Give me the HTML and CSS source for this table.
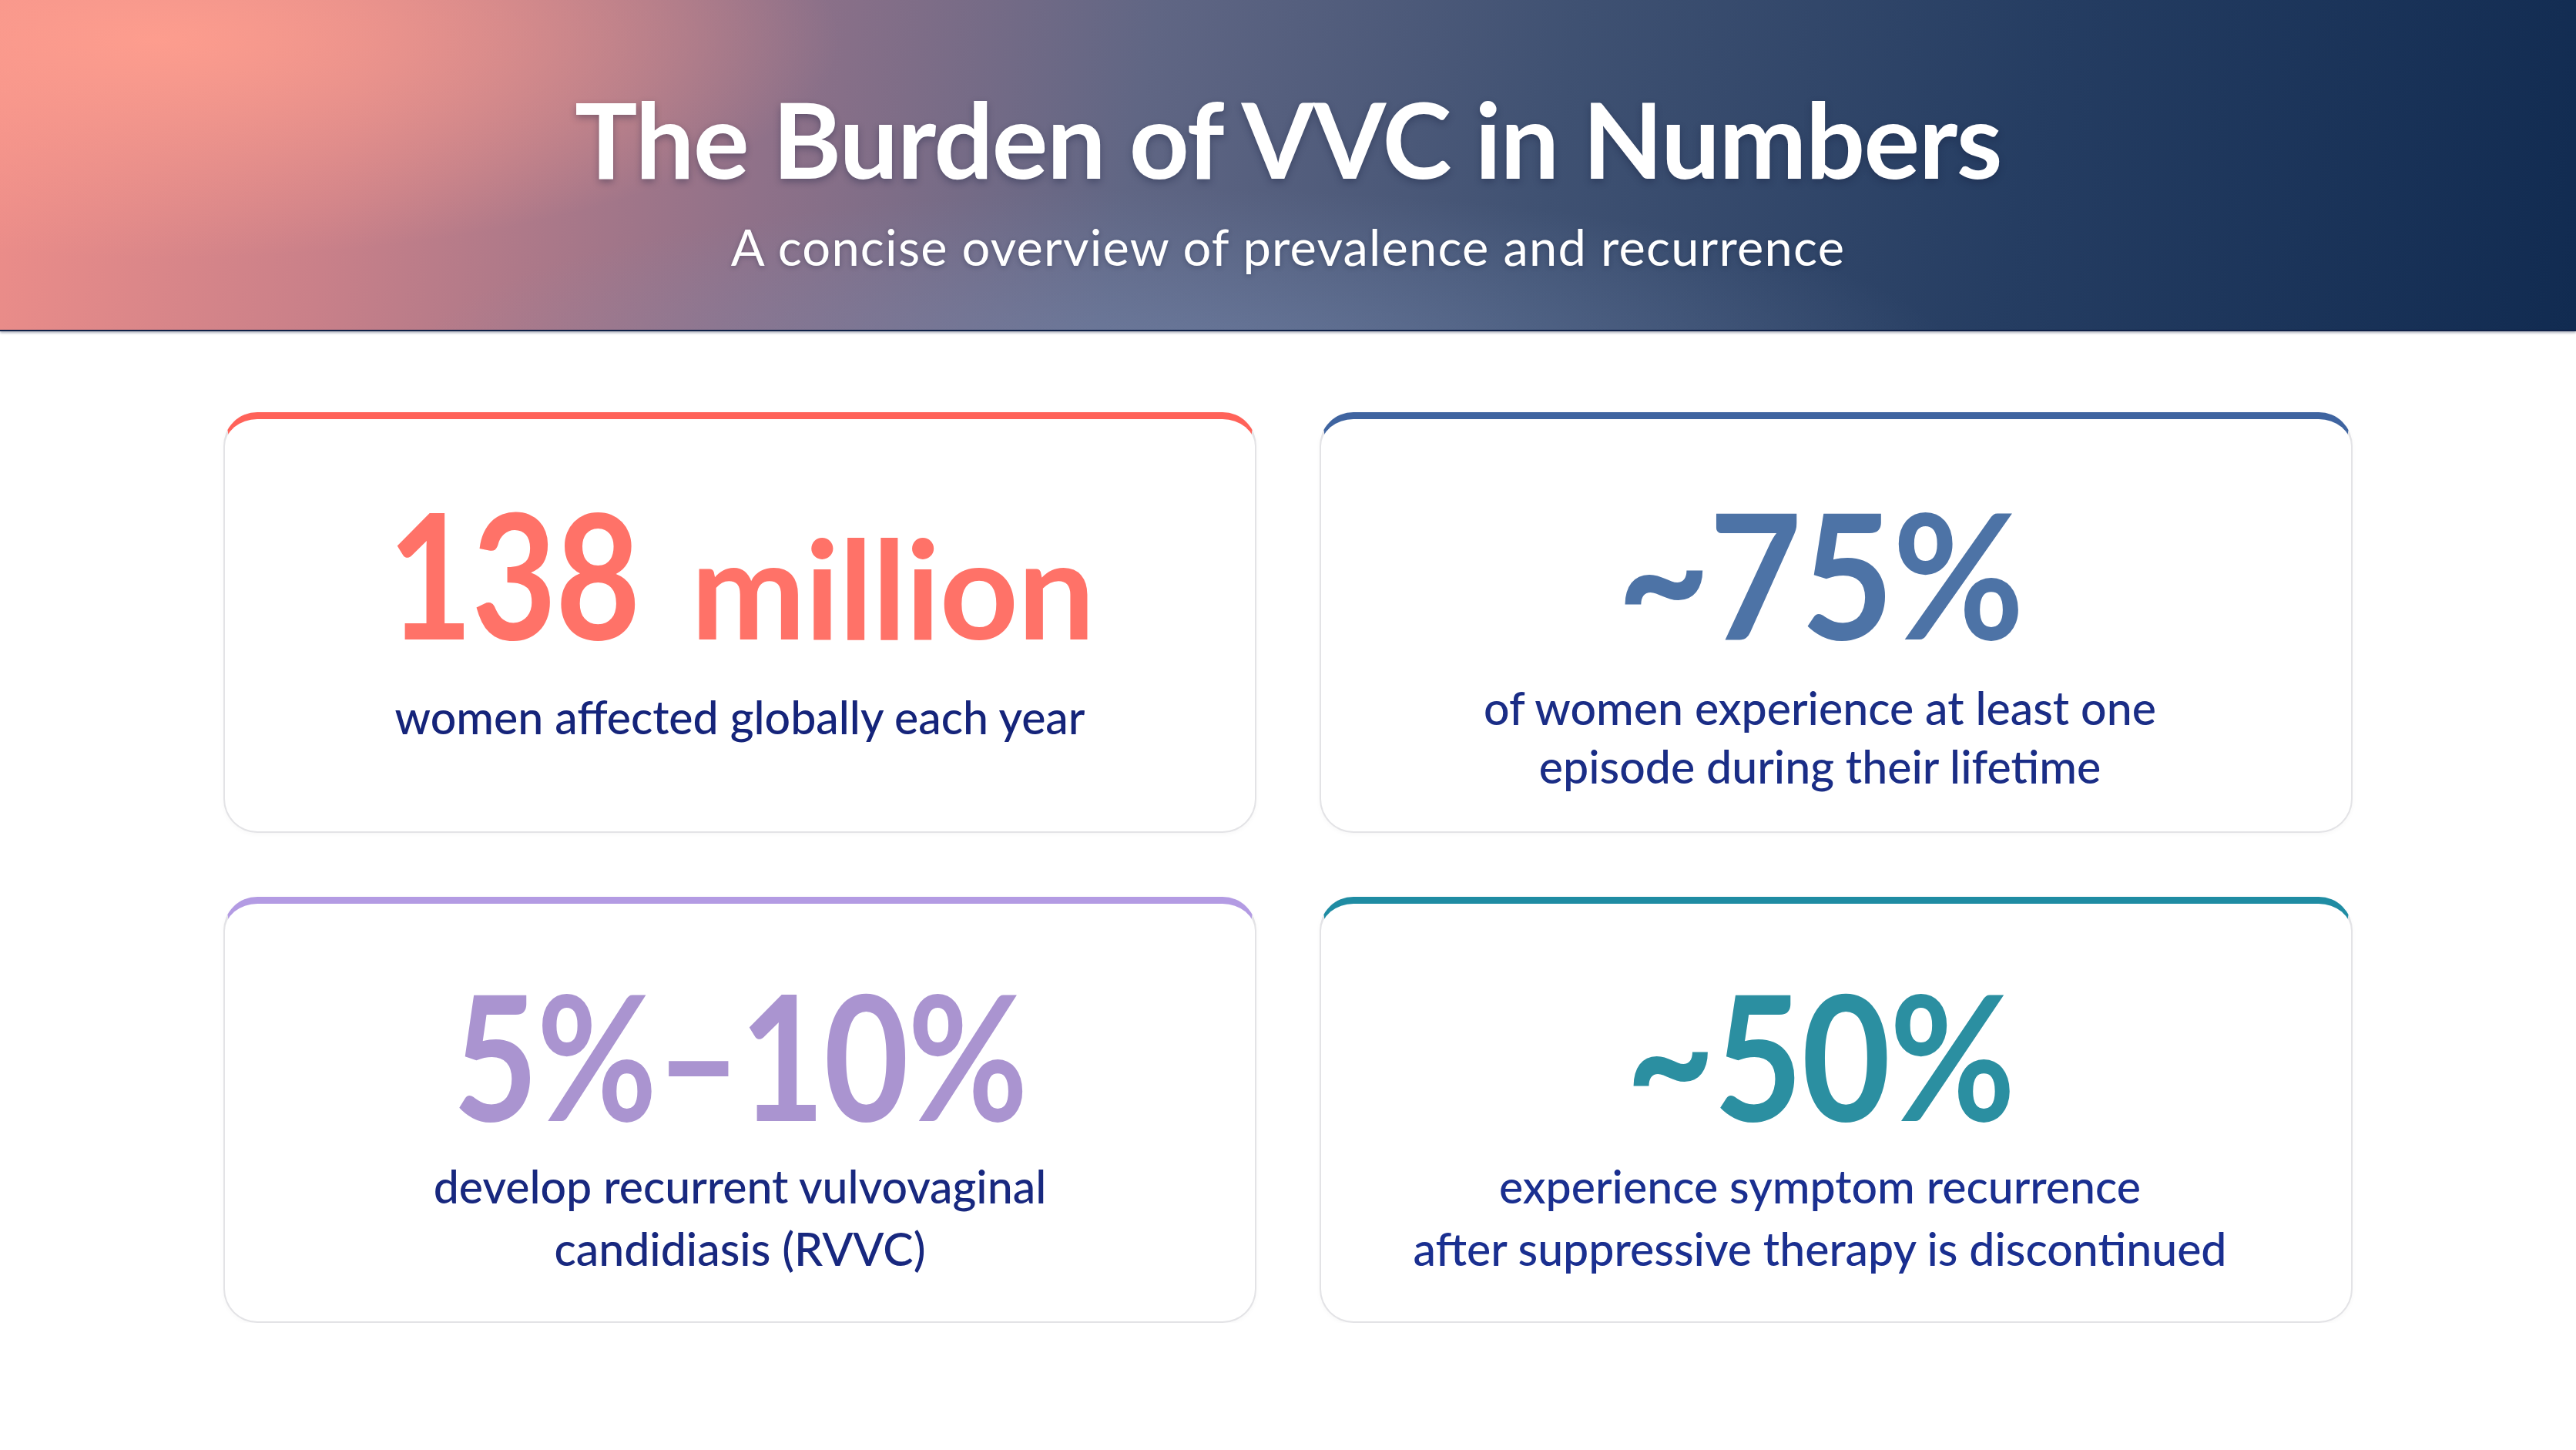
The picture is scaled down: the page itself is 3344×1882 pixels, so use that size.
FILE: index.html
```html
<!DOCTYPE html>
<html lang="en">
<head>
<meta charset="utf-8">
<title>The Burden of VVC in Numbers</title>
<link rel="stylesheet" href="styles.css">
</head>
<body>
<header class="hero">
  <h1 class="hero-title">The Burden of VVC in Numbers</h1>
  <p class="hero-sub">A concise overview of prevalence and recurrence</p>
</header>
<main class="stats">
  <section class="card card-coral">
    <div class="stat"><span class="num">138</span> <span class="unit">million</span></div>
    <p class="desc">women affected globally each year</p>
  </section>
  <section class="card card-blue">
    <div class="stat"><span class="num">~75%</span></div>
    <p class="desc">of women experience at least one<br>episode during their lifetime</p>
  </section>
  <section class="card card-purple">
    <div class="stat"><span class="num">5%–10%</span></div>
    <p class="desc">develop recurrent vulvovaginal<br>candidiasis (RVVC)</p>
  </section>
  <section class="card card-teal">
    <div class="stat"><span class="num">~50%</span></div>
    <p class="desc">experience symptom recurrence<br>after suppressive therapy is discontinued</p>
  </section>
</main>
</body>
</html>
```

FILE: styles.css
```css
html, body {
  margin: 0;
  padding: 0;
  background: #ffffff;
  font-family: Lato, "Liberation Sans", sans-serif;
}

.hero {
  height: 430px;
  box-sizing: border-box;
  display: flex;
  flex-direction: column;
  align-items: center;
  justify-content: center;
  padding-top: 36px;
  background:
    radial-gradient(ellipse 38% 95% at 6% 12%, rgba(255, 158, 142, 0.95), rgba(255, 158, 142, 0) 70%),
    radial-gradient(ellipse 40% 70% at 46% 110%, rgba(120, 140, 178, 0.55), rgba(120, 140, 178, 0) 75%),
    linear-gradient(100deg, #ef8e89 0%, #c98089 14%, #8f7189 30%, #606684 44%, #3f5172 60%, #253d62 78%, #112b51 100%);
  box-shadow: 0 2px 3px rgba(20, 30, 60, 0.35);
  border-bottom: 2px solid #0f2148;
}

.hero-title {
  margin: 0;
  color: #ffffff;
  font-size: 136px;
  font-weight: 700;
  letter-spacing: -1.5px;
  line-height: 1.1;
  text-shadow: 0 4px 10px rgba(20, 30, 60, 0.35);
}

.hero-sub {
  margin: 26px 0 0;
  color: #ffffff;
  font-size: 65px;
  font-weight: 400;
  letter-spacing: 1.2px;
  line-height: 1.2;
  text-shadow: 0 2px 6px rgba(20, 30, 60, 0.3);
}

.stats {
  width: 2764px;
  margin: 105px auto 0;
  display: grid;
  grid-template-columns: 1fr 1fr;
  grid-template-rows: 546px 553px;
  column-gap: 82px;
  row-gap: 83px;
}

.card {
  box-sizing: border-box;
  border: 2px solid #e3e3e6;
  border-top: 9px solid #ff6259;
  border-radius: 44px;
  background: #ffffff;
  padding: 74px 40px 0;
  display: flex;
  flex-direction: column;
  align-items: center;
  text-align: center;
  box-shadow: 0 2px 6px rgba(0, 0, 0, 0.03);
}

.card:nth-child(even) {
  padding-left: 20px;
  padding-right: 62px;
}

.card:nth-child(n+3) {
  padding-top: 70px;
}

.stat {
  font-size: 227px;
  font-weight: 700;
  line-height: 1.1;
  letter-spacing: -2px;
  white-space: nowrap;
}

.num {
  display: inline-block;
  transform-origin: center;
}

.unit {
  font-size: 178px;
  letter-spacing: -1px;
}

.desc {
  margin: 6px 0 0;
  font-size: 59px;
  font-weight: 500;
  line-height: 78px;
  color: #15247a;
}

.card-coral { border-top-color: #ff6259; }
.card-coral .stat { color: #ff7268; }
.card-coral .num {
  transform: scaleX(0.84);
  transform-origin: right center;
  margin-left: -60px;
  margin-right: 14px;
}
.card-coral .desc { margin-top: 24px; }

.card-blue { border-top-color: #3f64a0; }
.card-blue .stat { color: #4d73a6; }
.card-blue .num { transform: scaleX(0.92); }
.card-blue .desc { color: #1a2d86; margin-top: 13px; line-height: 76px; }

.card-purple { border-top-color: #b39be3; }
.card-purple .stat { color: #aa94d0; }
.card-purple .num { transform: scaleX(0.84); }
.card-purple .desc { color: #18287f; margin-top: 6px; line-height: 81px; }

.card-teal { border-top-color: #1f8ca3; }
.card-teal .stat { color: #2b8fa1; }
.card-teal .num { transform: scaleX(0.88); }
.card-teal .desc { color: #1a2f90; margin-top: 6px; line-height: 81px; }
```
